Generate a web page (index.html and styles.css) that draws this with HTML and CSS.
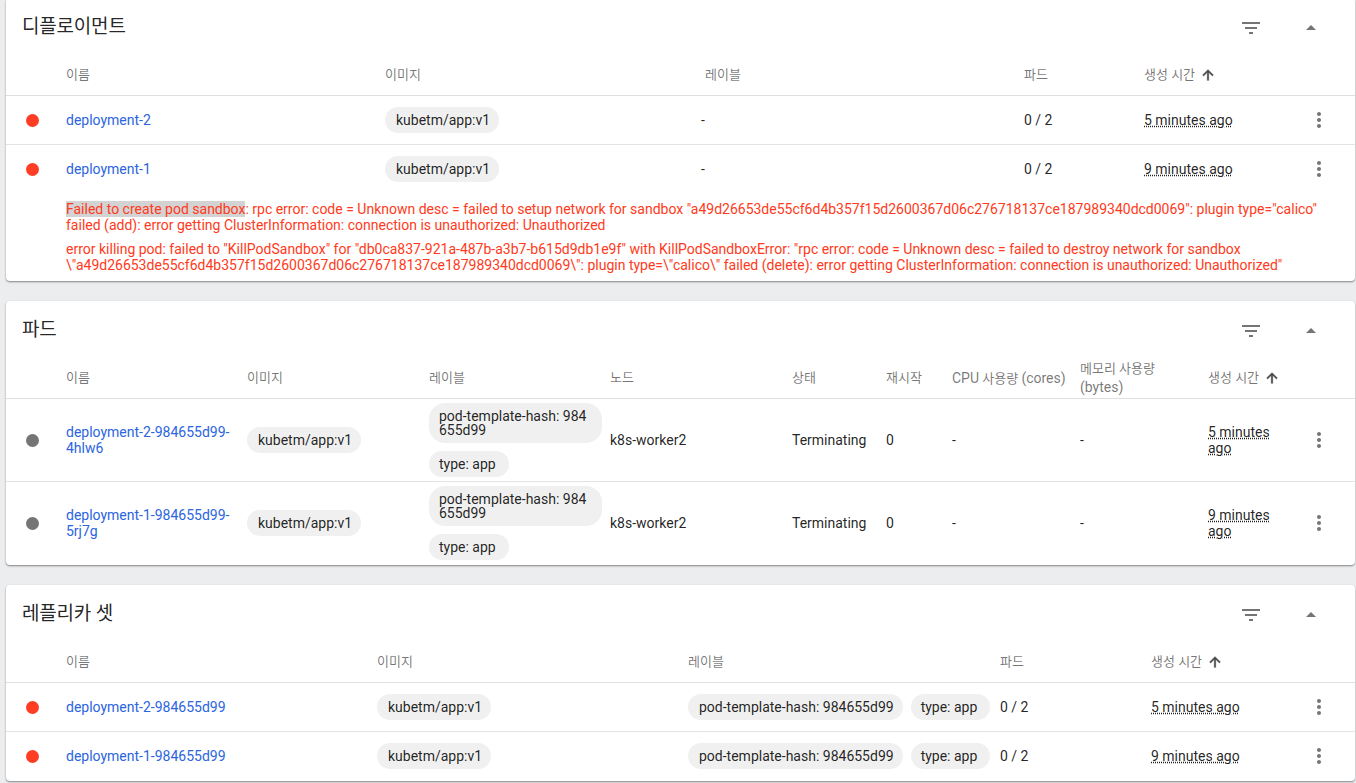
FILE: index.html
```html
<!DOCTYPE html>
<html lang="ko">
<head>
<meta charset="utf-8">
<title>디플로이먼트</title>
<link rel="stylesheet" href="styles.css">
</head>
<body>
<svg class="defs" width="0" height="0" aria-hidden="true">
  <symbol id="i-filter" viewBox="0 0 24 24"><path d="M10 18h4v-2h-4v2zM3 6v2h18V6H3zm3 7h12v-2H6v2z"/></symbol>
  <symbol id="i-up" viewBox="0 0 24 24"><path d="M7 14l5-5 5 5z"/></symbol>
  <symbol id="i-more" viewBox="0 0 24 24"><path d="M12 8c1.1 0 2-.9 2-2s-.9-2-2-2-2 .9-2 2 .9 2 2 2zm0 2c-1.1 0-2 .9-2 2s.9 2 2 2 2-.9 2-2-.9-2-2-2zm0 6c-1.1 0-2 .9-2 2s.9 2 2 2 2-.9 2-2-.9-2-2-2z"/></symbol>
  <symbol id="i-arrow" viewBox="0 0 24 24"><path d="M4 12l1.41 1.41L11 7.83V20h2V7.83l5.58 5.59L20 12l-8-8-8 8z"/></symbol>
</svg>
<main class="page">

<section class="card">
  <header class="card-head">
    <h2 class="card-title">디플로이먼트</h2>
    <svg class="icon head-filter"><use href="#i-filter"/></svg>
    <svg class="icon head-up"><use href="#i-up"/></svg>
  </header>
  <div class="row head cols-deploy">
    <span></span><span>이름</span><span>이미지</span><span>레이블</span><span>파드</span>
    <span class="sort">생성 시간 <svg class="sort-arrow"><use href="#i-arrow"/></svg></span><span></span>
  </div>
  <div class="row body short cols-deploy">
    <span class="dot red"></span><a class="link">deployment-2</a>
    <span><span class="chip">kubetm/app:v1</span></span><span class="nudge">-</span><span>0 / 2</span>
    <span><abbr class="age">5 minutes ago</abbr></span><svg class="icon more"><use href="#i-more"/></svg>
  </div>
  <div class="row body short last cols-deploy">
    <span class="dot red"></span><a class="link">deployment-1</a>
    <span><span class="chip">kubetm/app:v1</span></span><span class="nudge">-</span><span>0 / 2</span>
    <span><abbr class="age">9 minutes ago</abbr></span><svg class="icon more"><use href="#i-more"/></svg>
  </div>
  <div class="errors">
    <p><mark class="hl">Failed to create pod sandbox</mark>: rpc error: code = Unknown desc = failed to setup network for sandbox "a49d26653de55cf6d4b357f15d2600367d06c276718137ce187989340dcd0069": plugin type="calico" failed (add): error getting ClusterInformation: connection is unauthorized: Unauthorized</p>
    <p>error killing pod: failed to "KillPodSandbox" for "db0ca837-921a-487b-a3b7-b615d9db1e9f" with KillPodSandboxError: "rpc error: code = Unknown desc = failed to destroy network for sandbox \"a49d26653de55cf6d4b357f15d2600367d06c276718137ce187989340dcd0069\": plugin type=\"calico\" failed (delete): error getting ClusterInformation: connection is unauthorized: Unauthorized"</p>
  </div>
</section>

<section class="card">
  <header class="card-head">
    <h2 class="card-title">파드</h2>
    <svg class="icon head-filter"><use href="#i-filter"/></svg>
    <svg class="icon head-up"><use href="#i-up"/></svg>
  </header>
  <div class="row head cols-pods">
    <span></span><span>이름</span><span>이미지</span><span>레이블</span><span>노드</span><span>상태</span><span>재시작</span>
    <span><span class="latin">CPU</span> 사용량 <span class="latin">(cores)</span></span>
    <span>메모리 사용량<br><span class="latin">(bytes)</span></span>
    <span class="sort">생성 시간 <svg class="sort-arrow"><use href="#i-arrow"/></svg></span><span></span>
  </div>
  <div class="row body tall cols-pods">
    <span class="dot gray"></span><a class="link">deployment-2-984655d99-4hlw6</a>
    <span><span class="chip">kubetm/app:v1</span></span>
    <span class="chips"><span class="chip wrap">pod-template-hash: 984655d99</span><span class="chip type">type: app</span></span>
    <span>k8s-worker2</span><span>Terminating</span><span>0</span><span>-</span><span>-</span>
    <span class="age-cell"><abbr class="age">5 minutes ago</abbr></span><svg class="icon more"><use href="#i-more"/></svg>
  </div>
  <div class="row body tall last cols-pods">
    <span class="dot gray"></span><a class="link">deployment-1-984655d99-5rj7g</a>
    <span><span class="chip">kubetm/app:v1</span></span>
    <span class="chips"><span class="chip wrap">pod-template-hash: 984655d99</span><span class="chip type">type: app</span></span>
    <span>k8s-worker2</span><span>Terminating</span><span>0</span><span>-</span><span>-</span>
    <span class="age-cell"><abbr class="age">9 minutes ago</abbr></span><svg class="icon more"><use href="#i-more"/></svg>
  </div>
</section>

<section class="card">
  <header class="card-head">
    <h2 class="card-title">레플리카 셋</h2>
    <svg class="icon head-filter"><use href="#i-filter"/></svg>
    <svg class="icon head-up"><use href="#i-up"/></svg>
  </header>
  <div class="row head cols-rs">
    <span></span><span>이름</span><span>이미지</span><span>레이블</span><span>파드</span>
    <span class="sort">생성 시간 <svg class="sort-arrow"><use href="#i-arrow"/></svg></span><span></span>
  </div>
  <div class="row body short cols-rs">
    <span class="dot red"></span><a class="link">deployment-2-984655d99</a>
    <span><span class="chip">kubetm/app:v1</span></span>
    <span class="chips inline"><span class="chip">pod-template-hash: 984655d99</span><span class="chip type">type: app</span></span>
    <span>0 / 2</span>
    <span><abbr class="age">5 minutes ago</abbr></span><svg class="icon more"><use href="#i-more"/></svg>
  </div>
  <div class="row body short last cols-rs">
    <span class="dot red"></span><a class="link">deployment-1-984655d99</a>
    <span><span class="chip">kubetm/app:v1</span></span>
    <span class="chips inline"><span class="chip">pod-template-hash: 984655d99</span><span class="chip type">type: app</span></span>
    <span>0 / 2</span>
    <span><abbr class="age">9 minutes ago</abbr></span><svg class="icon more"><use href="#i-more"/></svg>
  </div>
</section>

</main>
</body>
</html>
```
FILE: styles.css
```css
* { box-sizing: border-box; }
html, body { margin: 0; height: 783px; overflow: hidden; }
body {
  background: #ebedef;
  color: rgba(0, 0, 0, .87);
  font: 14px/20px Roboto, "Noto Sans CJK KR", sans-serif;
}
.defs { display: block; }
.page {
  display: flex;
  flex-direction: column;
  gap: 20px;
  margin-top: -2px;
  padding: 0 1px 0 6px;
}
.card {
  background: #fff;
  border-radius: 4px;
  box-shadow: 0 1px 2px rgba(0, 0, 0, .45);
}
.card-head {
  display: flex;
  align-items: center;
  height: 58px;
  padding: 0 32px 0 16px;
}
.card-title {
  flex: 1;
  margin: 0;
  font: 400 19px/28px Roboto, "Noto Sans CJK KR", sans-serif;
  letter-spacing: -.2px;
}
.icon { width: 24px; height: 24px; fill: #757575; flex: none; }
.head-filter, .head-up { margin-top: 2px; }
.head-up { margin-left: 36px; }
.row { display: grid; align-items: center; }
.head {
  height: 40px;
  color: rgba(0, 0, 0, .54);
  font-size: 13px;
  line-height: 18px;
  padding-bottom: 1px;
  border-bottom: 1px solid #dfdfdf;
}
.latin { font-size: 14px; }
.body { border-bottom: 1px solid #e3e3e3; }
.body.last { border-bottom-color: transparent; }
.short { height: 49px; }
.tall { height: 83px; }
.cols-deploy { grid-template-columns: 60px 319px 320px 319px 120px 163px 24px; }
.cols-pods { grid-template-columns: 60px 181px 182px 181px 182px 94px 66px 128px 128px 99px 24px; }
.cols-rs { grid-template-columns: 60px 311px 311px 312px 151px 156px 24px; }
.age-cell { padding-right: 16px; line-height: 16px; }
.dot { width: 13px; height: 13px; margin-left: 20px; border-radius: 50%; }
.red { background: #ff3d24; }
.gray { background: #757575; }
.link { color: #2b65e0; display: block; padding-right: 16px; line-height: 16px; }
.chip {
  display: inline-block;
  background: #f0f0f0;
  border-radius: 13px;
  padding: 3px 9px 3px 11px;
  line-height: 20px;
}
.chip.type { padding: 3px 13px 3px 10px; }
.chip.wrap {
  display: block;
  width: 173px;
  height: 40px;
  padding: 6px 10px 3px;
  line-height: 14px;
  border-radius: 16px;
  word-break: break-all;
}
.chips { display: flex; flex-direction: column; align-items: flex-start; gap: 8px; }
.chips.inline { flex-direction: row; }
.nudge { margin-left: -4px; }
.sort { display: flex; align-items: center; gap: 5px; }
.sort-arrow { width: 16px; height: 16px; fill: #444; stroke: #444; stroke-width: .8px; flex: none; }
.age {
  text-decoration: underline dotted;
  text-underline-offset: 1px;
  line-height: 16px;
}
.more { justify-self: start; }
.errors {
  padding: 7px 16px 8px 60px;
  color: #ff3a20;
  line-height: 16px;
}
.errors p { margin: 0 0 8px; }
.errors p:last-child { margin-bottom: 0; }
.hl { background: #d3d3d3; color: inherit; }
```
